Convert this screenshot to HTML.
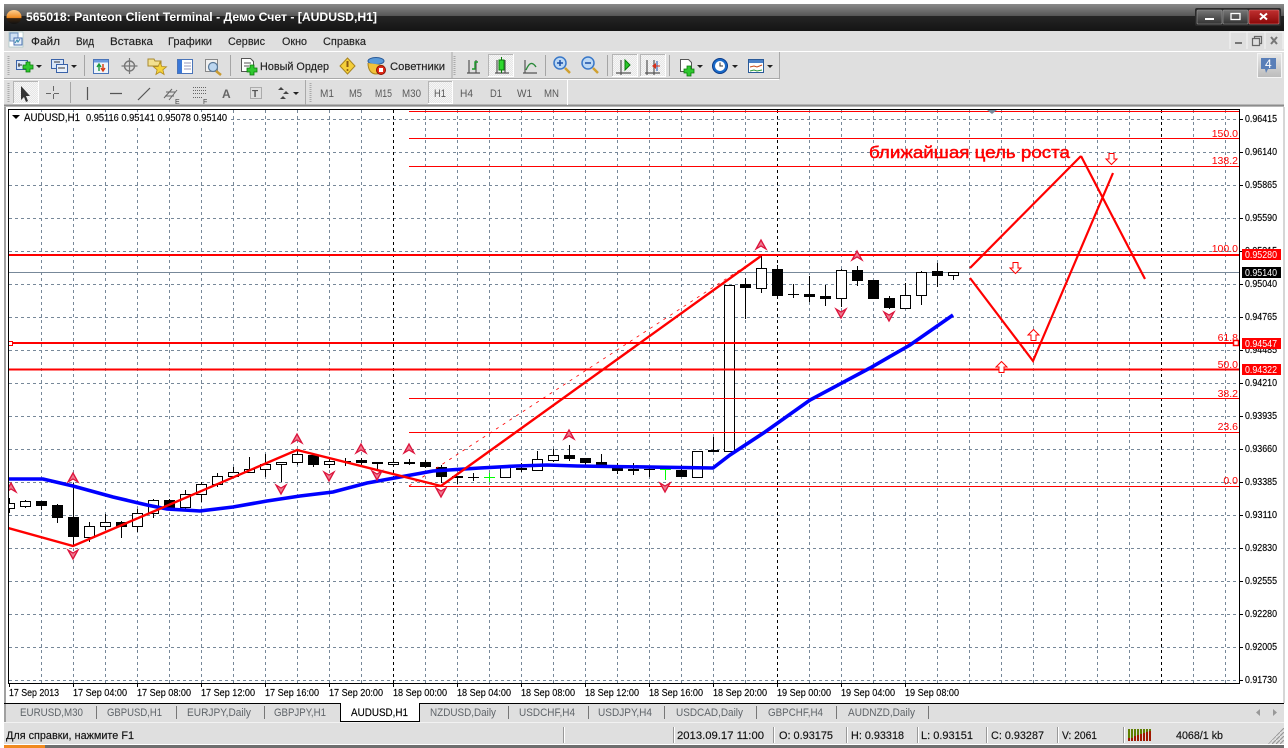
<!DOCTYPE html>
<html><head><meta charset="utf-8"><title>Panteon Client Terminal</title>
<style>
html,body{margin:0;padding:0;background:#fff;overflow:hidden}
svg{display:block}
text{font-family:"Liberation Sans","Noto Sans CJK JP",sans-serif}
</style></head><body>
<svg xmlns="http://www.w3.org/2000/svg" width="1288" height="748" viewBox="0 0 1288 748" font-size="11">
<defs>
<linearGradient id="tb" x1="0" y1="0" x2="0" y2="1"><stop offset="0" stop-color="#8a8a8a"/><stop offset="1" stop-color="#555"/></linearGradient>
<linearGradient id="tb2" x1="0" y1="0" x2="0" y2="1"><stop offset="0" stop-color="#252525"/><stop offset="1" stop-color="#141414"/></linearGradient>
<linearGradient id="orb" x1="0" y1="0" x2="0" y2="1"><stop offset="0" stop-color="#ffcf90"/><stop offset=".55" stop-color="#f08a20"/><stop offset=".6" stop-color="#3a2410"/><stop offset="1" stop-color="#111"/></linearGradient>
<linearGradient id="btn" x1="0" y1="0" x2="0" y2="1"><stop offset="0" stop-color="#777"/><stop offset="1" stop-color="#333"/></linearGradient>
<linearGradient id="cls" x1="0" y1="0" x2="0" y2="1"><stop offset="0" stop-color="#c03030"/><stop offset="1" stop-color="#8a0808"/></linearGradient>
<linearGradient id="bub" x1="0" y1="0" x2="0" y2="1"><stop offset="0" stop-color="#e8e8e8"/><stop offset="1" stop-color="#bbb"/></linearGradient>
<pattern id="chk" width="2" height="2" patternUnits="userSpaceOnUse"><rect width="2" height="2" fill="#e6e6e6"/><rect width="1" height="1" fill="#f6f6f6"/><rect x="1" y="1" width="1" height="1" fill="#f6f6f6"/></pattern>
<pattern id="grip" width="4" height="4" patternUnits="userSpaceOnUse"><path d="M0 4L4 0" stroke="#999" stroke-width="1.2"/></pattern>
<clipPath id="cc"><rect x="9" y="110" width="1231" height="573"/></clipPath>
<g id="up"><path d="M0-5L5 4L0 1L-5 4Z" fill="#ee7a90" stroke="#dc143c" stroke-width="1.3"/></g>
<g id="dn"><path d="M0 5L5-4L0-1L-5-4Z" fill="#ee7a90" stroke="#dc143c" stroke-width="1.3"/></g>
<g id="au"><path d="M0-5.5L5.5 0H2.5V5.5H-2.5V0H-5.5Z" fill="#fff" stroke="#f00" stroke-width="1"/></g>
<g id="ad"><path d="M0 5.5L5.5 0H2.5V-5.5H-2.5V0H-5.5Z" fill="#fff" stroke="#f00" stroke-width="1"/></g>
<g id="dd"><path d="M0 0h6l-3 3z" fill="#222"/></g>
<g id="plus"><path d="M3 0h4v3h3v4H7v3H3V7H0V3h3z" fill="#2fc82f" stroke="#0a7a0a" stroke-width=".8"/></g>
</defs>

<rect width="1288" height="748" fill="#fff"/>
<!-- window body -->
<rect x="4" y="4" width="1280" height="744" fill="#dfdfdf"/>
<!-- title bar -->
<rect x="4" y="4" width="1280" height="12" fill="url(#tb)"/>
<rect x="4" y="16" width="1280" height="15" fill="url(#tb2)"/>
<ellipse cx="14" cy="17" rx="7.5" ry="7" fill="url(#orb)"/>
<text x="26" y="21" font-size="12" font-weight="bold" fill="#fff" textLength="351" lengthAdjust="spacingAndGlyphs">565018: Panteon Client Terminal - Демо Счет - [AUDUSD,H1]</text>
<!-- window buttons -->
<rect x="1195" y="8" width="86" height="18" rx="2" fill="#2a2a2a"/>
<rect x="1197" y="10" width="25" height="14" rx="1" fill="url(#btn)" stroke="#999" stroke-width=".6"/>
<rect x="1223" y="10" width="25" height="14" rx="1" fill="url(#btn)" stroke="#999" stroke-width=".6"/>
<rect x="1249" y="10" width="30" height="14" rx="1" fill="url(#cls)" stroke="#d88" stroke-width=".6"/>
<rect x="1205" y="18" width="9" height="2" fill="#fff"/>
<rect x="1231" y="13.5" width="9" height="6" fill="none" stroke="#fff" stroke-width="1.3"/>
<path d="M1260 13.5l7 6m0-6l-7 6" stroke="#fff" stroke-width="2"/>

<!-- menu -->
<rect x="9" y="32" width="14" height="15" fill="#fff" stroke="#9bb" stroke-width=".6"/>
<rect x="10" y="33" width="8" height="8" fill="#cfe0f4" stroke="#6a8fc0"/>
<rect x="14" y="38" width="8" height="7" fill="#e6effa" stroke="#4a70b0"/>
<path d="M15 43l2-3 1 2 2-3" stroke="#38a" fill="none"/>
<g fill="#222" stroke="#222" stroke-width=".15">
<text x="31" y="45" textLength="29" lengthAdjust="spacingAndGlyphs">Файл</text>
<text x="76" y="45" textLength="18" lengthAdjust="spacingAndGlyphs">Вид</text>
<text x="110" y="45" textLength="43" lengthAdjust="spacingAndGlyphs">Вставка</text>
<text x="168" y="45" textLength="44" lengthAdjust="spacingAndGlyphs">Графики</text>
<text x="228" y="45" textLength="37" lengthAdjust="spacingAndGlyphs">Сервис</text>
<text x="282" y="45" textLength="25" lengthAdjust="spacingAndGlyphs">Окно</text>
<text x="323" y="45" textLength="43" lengthAdjust="spacingAndGlyphs">Справка</text>
</g>
<!-- mdi buttons -->
<path d="M1230 49V32h53v17" fill="none" stroke="#f4f4f4"/>
<path d="M1265 32v17M1247 32v17" stroke="#f4f4f4"/>
<rect x="1235" y="42" width="7" height="2" fill="#777"/>
<path d="M1252.5 38.5h7v7h-7zM1254.5 38.5v-2h7v7h-2" fill="none" stroke="#666" stroke-width="1.2"/>
<path d="M1271 37l6 7m0-7l-6 7" stroke="#777" stroke-width="2"/>

<!-- toolbar rows -->
<rect x="4" y="51" width="1280" height="1" fill="#fff"/>
<rect x="4" y="52" width="775" height="26" fill="#dfdfdf"/>
<path d="M4 78.5H779M779.5 52V79" stroke="#a9a9a9"/>
<rect x="4" y="79" width="775" height="1" fill="#fff"/>
<path d="M4 105.5H1284" stroke="#8c8c8c" stroke-width="2"/>
<path d="M567.5 80V105" stroke="#fff"/>
<path d="M305.5 80V105M452 52V78" stroke="#a9a9a9"/>
<path d="M8.5 56V75M8.5 83V102M310.5 83V102M454.5 56V75" stroke="#aaa" stroke-dasharray="1 1" stroke-width="2"/>
<path d="M84.5 55V76M230.5 55V76M545.5 55V76M607.5 55V76M669.5 55V76M70.5 82V103" stroke="#a5a5a5"/>

<!-- pressed buttons -->
<g fill="url(#chk)" stroke="#fff">
<rect x="488.5" y="54.5" width="25" height="22"/>
<rect x="612.5" y="54.5" width="25" height="22"/>
<rect x="640.5" y="54.5" width="25" height="22"/>
<rect x="13.5" y="81.5" width="25" height="22"/>
<rect x="428.5" y="81.5" width="24" height="22"/>
</g>
<path d="M488.5 76V54.5H513M612.5 76V54.5H637M640.5 76V54.5H665M13.5 103V81.5H38M428.5 103V81.5H452" fill="none" stroke="#b5b5b5"/>

<!-- row 1 icons -->
<rect x="16.5" y="60.5" width="11" height="9" fill="#d8e6f8" stroke="#3a62a8"/><path d="M19 63v4M18 65h4" stroke="#333"/>
<use href="#plus" x="23" y="62"/><use href="#dd" x="36" y="65"/>
<rect x="51.5" y="59.5" width="12" height="9" fill="#d8e6f8" stroke="#3a62a8"/><rect x="56.5" y="64.5" width="11" height="8" fill="#e8f0fb" stroke="#3a62a8"/>
<path d="M54 62h6M58 68h7" stroke="#333"/><use href="#dd" x="71" y="65"/>
<rect x="93.5" y="59.5" width="15" height="14" fill="#eef4fb" stroke="#4a74b8"/><rect x="94" y="60" width="14" height="2.5" fill="#6a9ae0"/>
<path d="M99 71v-6m-2 2l2-3 2 3" stroke="#1a9a3a" fill="none" stroke-width="1.4"/><path d="M103 64v6m-2-2l2 3 2-3" stroke="#d83a10" fill="none" stroke-width="1.4"/>
<circle cx="129.5" cy="66" r="5" fill="none" stroke="#777" stroke-width="1.4"/><path d="M129.5 58v16M121.5 66h16" stroke="#777" stroke-width="1.2"/>
<path d="M148 59h6l1 2h6v5h-13z" fill="#f2e090" stroke="#a88a30"/><path d="M160 62l1.8 4.5 4.7.3-3.600 3 1.200 4.700-4.100-2.600-4.100 2.600 1.200-4.700-3.600-3 4.700-.3z" fill="#f5d33a" stroke="#b08a20" stroke-width=".8"/>
<rect x="177.5" y="59.5" width="15" height="14" fill="#fff" stroke="#4a74b8"/><rect x="178" y="60" width="4" height="13" fill="#3a78d8"/><path d="M184 63h7M184 66h7M184 69h7" stroke="#99b"/>
<rect x="205.5" y="59.5" width="12" height="12" fill="#f0f0f0" stroke="#888"/><circle cx="213" cy="67" r="4.5" fill="#bcd6f0" stroke="#5a7a9a" stroke-width="1.2"/><path d="M216 71l5 4" stroke="#c89a30" stroke-width="2.5"/>
<path d="M241.5 58.5h9l3 3v10h-12z" fill="#fff" stroke="#555"/><path d="M244 63h7M244 66h5" stroke="#555"/><use href="#plus" x="247" y="65"/>
<text x="260" y="70" fill="#222" stroke="#222" stroke-width=".15" textLength="69" lengthAdjust="spacingAndGlyphs">Новый Ордер</text>
<path d="M347.5 58l7.5 8-7.5 8-7.5-8z" fill="#f5cf3a" stroke="#a88420"/><path d="M347.5 61v6" stroke="#8a5a10" stroke-width="2"/><circle cx="347.5" cy="70" r="1" fill="#8a5a10"/>
<ellipse cx="376" cy="61" rx="8" ry="3.5" fill="#5a9ad8" stroke="#2a5a98"/><path d="M368 63c0 8 4 11 8 11s7-3 7-9" fill="#f2c23a" stroke="#a88420"/><circle cx="381" cy="70" r="4.5" fill="#e02a1a" stroke="#8a1000"/><rect x="379" y="68" width="4" height="4" fill="#fff"/>
<text x="390" y="70" fill="#222" stroke="#222" stroke-width=".15" textLength="55" lengthAdjust="spacingAndGlyphs">Советники</text>
<!-- chart type icons -->
<g fill="none" stroke="#555" stroke-width="1.2">
<path d="M469 60v13M476 60v13M467 73h13"/><path d="M497 60v13M505 60v13M495 73h14"/><path d="M525 60v13M523 73h14"/><path d="M616 73h15M621 60v15"/><path d="M647 60v15M654 60v15M645 73h15"/>
</g>
<path d="M472 69h3v-7h3" fill="none" stroke="#1a9a2a" stroke-width="1.4"/>
<rect x="499" y="60" width="5" height="10" fill="#2fd82f" stroke="#0a7a0a"/><path d="M501.5 57v3M501.5 70v3" stroke="#0a7a0a"/>
<path d="M526 70c3-7 6-9 10-3" fill="none" stroke="#2a8a3a" stroke-width="1.4"/>
<path d="M625 60l5 5-5 5z" fill="#2ac82a" stroke="#0a7a0a"/>
<path d="M657 61v10" stroke="#1a50b0" stroke-width="1"/><path d="M652 66l4-3v6z" fill="#d8301a"/><path d="M656 66h4" stroke="#d8301a"/>
<!-- zoom -->
<circle cx="560" cy="63" r="6" fill="#bcd8f4" stroke="#3a78c8" stroke-width="1.5"/><path d="M557 63h6M560 60v6" stroke="#1a50a8" stroke-width="1.5"/><path d="M565 68l5 5" stroke="#d0a030" stroke-width="2.5"/>
<circle cx="588" cy="63" r="6" fill="#bcd8f4" stroke="#3a78c8" stroke-width="1.5"/><path d="M585 63h6" stroke="#1a50a8" stroke-width="1.5"/><path d="M593 68l5 5" stroke="#d0a030" stroke-width="2.5"/>
<!-- template, clock, window -->
<path d="M680.5 59.5h8l3 3v9h-11z" fill="#fff" stroke="#555"/><use href="#plus" x="684" y="66"/><use href="#dd" x="697" y="65"/>
<circle cx="720" cy="66" r="7.5" fill="#1a6ac8" stroke="#0a3a88"/><circle cx="720" cy="66" r="5" fill="#fff"/><path d="M720 62.5V66h3" stroke="#333" fill="none"/><use href="#dd" x="732" y="65"/>
<rect x="748.5" y="59.5" width="15" height="13" fill="#fff" stroke="#2a5a98"/><rect x="749" y="60" width="14" height="3" fill="#4a80c8"/><path d="M750 67l4-1 3 1 5-2" stroke="#c84a1a" fill="none"/><path d="M750 71l4-1 3 1 5-1" stroke="#2a9a3a" fill="none"/><use href="#dd" x="767" y="65"/>
<!-- message button -->
<rect x="1257.5" y="53.5" width="24" height="24" fill="url(#bub)" stroke="#f4f4f4"/>
<path d="M1261 58h15v11h-8l-2 4-1-4h-4z" fill="#5a7fb8"/>
<text x="1265" y="68" font-size="12" fill="#fff">4</text>

<!-- row 2 icons -->
<path d="M21 86v14l3-3 2 5 2-1-2-5h4z" fill="#333"/>
<path d="M53.5 86v14M46 93.5h15" stroke="#666" stroke-dasharray="5 3"/>
<path d="M87.5 87v13M110 93.5h12M138 100l12-12" stroke="#555" stroke-width="1.2"/>
<path d="M164 98l8-9M169 100l8-10M166 92h9M165 96h9" stroke="#666" fill="none"/><text x="175" y="104" font-size="7" fill="#444">E</text>
<path d="M193 87.5h14M193 90.5h14M193 93.5h14M193 97.5h10" stroke="#666" stroke-dasharray="1 1"/><text x="203" y="104" font-size="7" fill="#444">F</text>
<text x="222" y="98" font-size="12" font-weight="bold" fill="#666">A</text>
<rect x="250.5" y="87.5" width="11" height="11" fill="none" stroke="#777" stroke-dasharray="1 1"/><text x="252" y="97" font-size="10" font-weight="bold" fill="#555">T</text>
<path d="M281 87l3 3h-6zM286 91l3 3h-6zM283 96l3 3h-6z" fill="#444"/><use href="#dd" x="293" y="92"/>
<g fill="#5a5a5a" font-size="11">
<text x="320" y="97" textLength="14" lengthAdjust="spacingAndGlyphs">M1</text>
<text x="349" y="97" textLength="13" lengthAdjust="spacingAndGlyphs">M5</text>
<text x="375" y="97" textLength="17" lengthAdjust="spacingAndGlyphs">M15</text>
<text x="402" y="97" textLength="19" lengthAdjust="spacingAndGlyphs">M30</text>
<text x="434" y="97" textLength="12" lengthAdjust="spacingAndGlyphs">H1</text>
<text x="460" y="97" textLength="13" lengthAdjust="spacingAndGlyphs">H4</text>
<text x="490" y="97" textLength="12" lengthAdjust="spacingAndGlyphs">D1</text>
<text x="517" y="97" textLength="15" lengthAdjust="spacingAndGlyphs">W1</text>
<text x="544" y="97" textLength="15" lengthAdjust="spacingAndGlyphs">MN</text>
</g>

<!-- chart frame -->
<rect x="4" y="107" width="1280" height="596" fill="#fff"/>
<rect x="4" y="107" width="2" height="596" fill="#a0a0a0"/>
<rect x="1283" y="107" width="2" height="596" fill="#d6d6d6"/>
<rect x="9" y="110" width="1231" height="573" fill="#fff"/>

<g clip-path="url(#cc)" shape-rendering="crispEdges">
<!-- grid -->
<path fill="none" stroke="#778899" stroke-dasharray="3 3" d="M41.5 110V683M73.5 110V683M105.5 110V683M137.5 110V683M169.5 110V683M201.5 110V683M233.5 110V683M265.5 110V683M297.5 110V683M329.5 110V683M361.5 110V683M425.5 110V683M457.5 110V683M489.5 110V683M521.5 110V683M553.5 110V683M585.5 110V683M617.5 110V683M649.5 110V683M681.5 110V683M713.5 110V683M745.5 110V683M809.5 110V683M841.5 110V683M873.5 110V683M905.5 110V683M937.5 110V683M969.5 110V683M1001.5 110V683M1033.5 110V683M1065.5 110V683M1097.5 110V683M1129.5 110V683M1193.5 110V683M1225.5 110V683M9 119.5H1240M9 152.5H1240M9 185.5H1240M9 218.5H1240M9 251.5H1240M9 284.5H1240M9 317.5H1240M9 350.5H1240M9 383.5H1240M9 416.5H1240M9 449.5H1240M9 482.5H1240M9 515.5H1240M9 548.5H1240M9 581.5H1240M9 614.5H1240M9 647.5H1240M9 680.5H1240"/>
<path fill="none" stroke="#000" stroke-dasharray="3 3" d="M393.5 110V683M777.5 110V683M1161.5 110V683"/>
<!-- current price line -->
<path d="M9 272.5H1240" stroke="#778899"/>
<!-- wicks -->
<path fill="none" stroke="#000" d="M9.5 498V513M25.5 500V508M41.5 501V510M57.5 504V523M73.5 483V546M89.5 522V542M105.5 514V530M121.5 521V538M137.5 509V532M153.5 499V518M169.5 499V510M185.5 490V510M201.5 482V502M217.5 473V487M233.5 467V478M249.5 457V473M265.5 454V477M281.5 462V482M297.5 450V465M313.5 455V467M329.5 458V468M345.5 458V466M361.5 458V465M377.5 462V469M393.5 459V466M409.5 459V465M425.5 460V468M441.5 465V483M457.5 477V484M473.5 473V481M505.5 465V477M521.5 463V472M537.5 451V470M553.5 449V462M569.5 445V461M585.5 458V465M601.5 454V465M617.5 463V474M633.5 463V475M649.5 467V477M681.5 465V477M713.5 437V452M745.5 278V319M761.5 255V293M777.5 265V296M793.5 284V298M809.5 276V302M825.5 285V306M841.5 269V307M857.5 266V286M889.5 296V309M905.5 283V308M921.5 271V305M937.5 263V287M953.5 272V280M468 477.5H479M788 294.5H799M644 469.5H655M340 461.5H351"/>
<!-- black bodies -->
<path fill="#000" d="M36 501h11v5h-11zM52 505h11v13h-11zM68 517h11v20h-11zM116 522h11v5h-11zM164 500h11v8h-11zM308 455h11v10h-11zM356 460h11v3h-11zM372 462h11v2h-11zM404 462h11v2h-11zM420 462h11v5h-11zM436 467h11v10h-11zM452 476h11v2h-11zM516 468h11v2h-11zM564 455h11v4h-11zM580 458h11v5h-11zM596 462h11v3h-11zM612 468h11v3h-11zM628 469h11v2h-11zM676 470h11v7h-11zM708 450h11v2h-11zM740 284h11v4h-11zM772 269h11v27h-11zM804 294h11v3h-11zM820 296h11v3h-11zM852 270h11v11h-11zM868 280h11v19h-11zM884 298h11v10h-11zM932 271h11v5h-11z"/>
<!-- white bodies -->
<path fill="#fff" stroke="#000" d="M4.5 503.5h10v5h-10zM20.5 501.5h10v5h-10zM84.5 526.5h10v11h-10zM100.5 522.5h10v4h-10zM132.5 513.5h10v13h-10zM148.5 500.5h10v13h-10zM180.5 494.5h10v13h-10zM196.5 484.5h10v10h-10zM212.5 476.5h10v8h-10zM228.5 472.5h10v4h-10zM244.5 469.5h10v3h-10zM260.5 464.5h10v5h-10zM276.5 462.5h10v2h-10zM292.5 454.5h10v8h-10zM324.5 461.5h10v3h-10zM388.5 462.5h10v2h-10zM500.5 467.5h10v10h-10zM532.5 459.5h10v11h-10zM548.5 455.5h10v5h-10zM692.5 451.5h10v26h-10zM724.5 285.5h10v166h-10zM756.5 268.5h10v20h-10zM836.5 270.5h10v28h-10zM900.5 295.5h10v13h-10zM916.5 272.5h10v23h-10zM948.5 272.5h10v3h-10z"/>
<!-- green dojis -->
<path fill="none" stroke="#00ff00" d="M484 477.5H495M489.5 473V482M660 469.5H671M665.5 469V480"/>
<!-- fibo -->
<path d="M409 111.5H1240M409 138.5H1240M409 166.5H1240M409 398.5H1240M409 432.5H1240M409 486.5H1240" stroke="#f00"/>
<path d="M9 255H1240M9 343H1240M9 369.5H1240" stroke="#f00" stroke-width="2"/>
</g>

<!-- chart legend bg -->
<rect x="9" y="112" width="219" height="13" fill="#fff"/>
<path d="M12 115h8l-4 4z" fill="#000"/>
<text x="24" y="121" textLength="56" lengthAdjust="spacingAndGlyphs" fill="#000" stroke="#000" stroke-width=".15">AUDUSD,H1</text>
<text x="86" y="121" font-size="10.5" textLength="141" lengthAdjust="spacingAndGlyphs" fill="#000" stroke="#000" stroke-width=".15">0.95116 0.95141 0.95078 0.95140</text>

<g clip-path="url(#cc)">
<!-- dashed trend -->
<path d="M409 486L761 256" stroke="#f00" stroke-width=".8" stroke-dasharray="3 5" fill="none"/>
<!-- blue MA -->
<path fill="none" stroke="#0000ff" stroke-width="3.6" d="M8 479L43 479L73 486L113 497L147 505L167 509L200 511L233 507L267 501L300 496L333 492L367 483L400 477L433 471L480 468L517 466L547 465L577 466L713 468L730 455L765 432L810 400L870 368L910 345L953 315"/>
<!-- red zigzag -->
<path fill="none" stroke="#f00" stroke-width="2.4" d="M8 528L73 546L297 450L441 486L761 256"/>
<!-- forecast -->
<path fill="none" stroke="#f00" stroke-width="2.2" d="M970 268L1081 156M1081 156L1145 279M970 278L1033 361L1113 173"/>
<!-- fractals -->
<use href="#up" x="11" y="488"/><use href="#up" x="73" y="478"/><use href="#up" x="297" y="439"/><use href="#up" x="361" y="449"/><use href="#up" x="409" y="449"/><use href="#up" x="569" y="435"/><use href="#up" x="761" y="245"/><use href="#up" x="857" y="256"/>
<use href="#dn" x="73" y="554"/><use href="#dn" x="281" y="489"/><use href="#dn" x="329" y="476"/><use href="#dn" x="377" y="475"/><use href="#dn" x="441" y="492"/><use href="#dn" x="665" y="487"/><use href="#dn" x="841" y="313"/><use href="#dn" x="889" y="316"/>
<!-- arrows -->
<use href="#ad" x="1111.5" y="159"/><use href="#ad" x="1015.5" y="268"/><use href="#au" x="1033.5" y="335"/><use href="#au" x="1001.5" y="367"/>
<text x="869" y="158" font-size="17" fill="#f00" stroke="#f00" stroke-width=".45" textLength="201" lengthAdjust="spacingAndGlyphs">ближайшая цель роста</text>
</g>
<!-- fibo labels -->
<g fill="#f00" font-size="10.5" text-anchor="end">
<text x="1238" y="137">150.0</text><text x="1238" y="164">138.2</text><text x="1238" y="252">100.0</text><text x="1238" y="341">61.8</text><text x="1238" y="368">50.0</text><text x="1238" y="397">38.2</text><text x="1238" y="430">23.6</text><text x="1238" y="484">0.0</text>
</g>
<rect x="1233.5" y="340.5" width="5" height="5" fill="#fff" stroke="#f00" stroke-width="1.5"/>
<rect x="8.5" y="341.5" width="4" height="4" fill="#fff" stroke="#f00"/>
<!-- frame lines -->
<rect x="8.5" y="109.5" width="1231" height="574" fill="none" stroke="#000"/>
<path d="M987 110h10l-5 4z" fill="#778899"/>
<!-- axis ticks -->
<path stroke="#000" d="M1240 119.5h3M1240 152.5h3M1240 185.5h3M1240 218.5h3M1240 251.5h3M1240 284.5h3M1240 317.5h3M1240 350.5h3M1240 383.5h3M1240 416.5h3M1240 449.5h3M1240 482.5h3M1240 515.5h3M1240 548.5h3M1240 581.5h3M1240 614.5h3M1240 647.5h3M1240 680.5h3M9.5 684v3M73.5 684v3M137.5 684v3M201.5 684v3M265.5 684v3M329.5 684v3M393.5 684v3M457.5 684v3M521.5 684v3M585.5 684v3M649.5 684v3M713.5 684v3M777.5 684v3M841.5 684v3M905.5 684v3"/>
<!-- price axis -->
<g fill="#000" stroke="#000" stroke-width=".15" font-size="10.5">
<text x="1245" y="122" textLength="32" lengthAdjust="spacingAndGlyphs">0.96415</text>
<text x="1245" y="155" textLength="32" lengthAdjust="spacingAndGlyphs">0.96140</text>
<text x="1245" y="188" textLength="32" lengthAdjust="spacingAndGlyphs">0.95865</text>
<text x="1245" y="221" textLength="32" lengthAdjust="spacingAndGlyphs">0.95590</text>
<text x="1245" y="254" textLength="32" lengthAdjust="spacingAndGlyphs">0.95315</text>
<text x="1245" y="287" textLength="32" lengthAdjust="spacingAndGlyphs">0.95040</text>
<text x="1245" y="320" textLength="32" lengthAdjust="spacingAndGlyphs">0.94765</text>
<text x="1245" y="353" textLength="32" lengthAdjust="spacingAndGlyphs">0.94485</text>
<text x="1245" y="386" textLength="32" lengthAdjust="spacingAndGlyphs">0.94210</text>
<text x="1245" y="419" textLength="32" lengthAdjust="spacingAndGlyphs">0.93935</text>
<text x="1245" y="452" textLength="32" lengthAdjust="spacingAndGlyphs">0.93660</text>
<text x="1245" y="485" textLength="32" lengthAdjust="spacingAndGlyphs">0.93385</text>
<text x="1245" y="518" textLength="32" lengthAdjust="spacingAndGlyphs">0.93110</text>
<text x="1245" y="551" textLength="32" lengthAdjust="spacingAndGlyphs">0.92830</text>
<text x="1245" y="584" textLength="32" lengthAdjust="spacingAndGlyphs">0.92555</text>
<text x="1245" y="617" textLength="32" lengthAdjust="spacingAndGlyphs">0.92280</text>
<text x="1245" y="650" textLength="32" lengthAdjust="spacingAndGlyphs">0.92005</text>
<text x="1245" y="683" textLength="32" lengthAdjust="spacingAndGlyphs">0.91730</text>
</g>
<!-- price tags -->
<rect x="1242" y="249" width="39" height="11" fill="#f00"/><rect x="1242" y="267" width="39" height="11" fill="#000"/><rect x="1242" y="338" width="39" height="11" fill="#f00"/><rect x="1242" y="364" width="39" height="11" fill="#f00"/>
<g fill="#fff" font-size="10.5">
<text x="1245" y="258" textLength="32" lengthAdjust="spacingAndGlyphs">0.95280</text>
<text x="1245" y="276" textLength="32" lengthAdjust="spacingAndGlyphs">0.95140</text>
<text x="1245" y="347" textLength="32" lengthAdjust="spacingAndGlyphs">0.94547</text>
<text x="1245" y="373" textLength="32" lengthAdjust="spacingAndGlyphs">0.94322</text>
</g>
<!-- date axis -->
<g fill="#000" stroke="#000" stroke-width=".15" font-size="10.5">
<text x="9" y="696" textLength="50" lengthAdjust="spacingAndGlyphs">17 Sep 2013</text>
<text x="73" y="696" textLength="54" lengthAdjust="spacingAndGlyphs">17 Sep 04:00</text>
<text x="137" y="696" textLength="54" lengthAdjust="spacingAndGlyphs">17 Sep 08:00</text>
<text x="201" y="696" textLength="54" lengthAdjust="spacingAndGlyphs">17 Sep 12:00</text>
<text x="265" y="696" textLength="54" lengthAdjust="spacingAndGlyphs">17 Sep 16:00</text>
<text x="329" y="696" textLength="54" lengthAdjust="spacingAndGlyphs">17 Sep 20:00</text>
<text x="393" y="696" textLength="54" lengthAdjust="spacingAndGlyphs">18 Sep 00:00</text>
<text x="457" y="696" textLength="54" lengthAdjust="spacingAndGlyphs">18 Sep 04:00</text>
<text x="521" y="696" textLength="54" lengthAdjust="spacingAndGlyphs">18 Sep 08:00</text>
<text x="585" y="696" textLength="54" lengthAdjust="spacingAndGlyphs">18 Sep 12:00</text>
<text x="649" y="696" textLength="54" lengthAdjust="spacingAndGlyphs">18 Sep 16:00</text>
<text x="713" y="696" textLength="54" lengthAdjust="spacingAndGlyphs">18 Sep 20:00</text>
<text x="777" y="696" textLength="54" lengthAdjust="spacingAndGlyphs">19 Sep 00:00</text>
<text x="841" y="696" textLength="54" lengthAdjust="spacingAndGlyphs">19 Sep 04:00</text>
<text x="905" y="696" textLength="54" lengthAdjust="spacingAndGlyphs">19 Sep 08:00</text>
</g>

<!-- tabs -->
<rect x="4" y="703" width="1280" height="19" fill="#dfdfdf"/>
<rect x="4" y="703" width="2" height="19" fill="#a0a0a0"/>
<path d="M4 703.5H1284" stroke="#000"/>
<rect x="4" y="722" width="1280" height="1" fill="#f2f2f2"/>
<path d="M340.5 703V721.5H419.5V703" fill="#fff" stroke="#000"/>
<rect x="341" y="703" width="78" height="1" fill="#fff"/>
<path d="M96.5 706V719M176.5 706V719M264.5 706V719M508.5 706V719M588.5 706V719M664.5 706V719M756.5 706V719M836.5 706V719M928.5 706V719" stroke="#777"/>
<g fill="#5f6469">
<text x="20" y="716" textLength="63" lengthAdjust="spacingAndGlyphs">EURUSD,M30</text>
<text x="107" y="716" textLength="55" lengthAdjust="spacingAndGlyphs">GBPUSD,H1</text>
<text x="187" y="716" textLength="64" lengthAdjust="spacingAndGlyphs">EURJPY,Daily</text>
<text x="274" y="716" textLength="52" lengthAdjust="spacingAndGlyphs">GBPJPY,H1</text>
<text x="430" y="716" textLength="66" lengthAdjust="spacingAndGlyphs">NZDUSD,Daily</text>
<text x="519" y="716" textLength="56" lengthAdjust="spacingAndGlyphs">USDCHF,H4</text>
<text x="598" y="716" textLength="54" lengthAdjust="spacingAndGlyphs">USDJPY,H4</text>
<text x="676" y="716" textLength="67" lengthAdjust="spacingAndGlyphs">USDCAD,Daily</text>
<text x="768" y="716" textLength="55" lengthAdjust="spacingAndGlyphs">GBPCHF,H4</text>
<text x="848" y="716" textLength="67" lengthAdjust="spacingAndGlyphs">AUDNZD,Daily</text>
</g>
<text x="351" y="716" textLength="57" lengthAdjust="spacingAndGlyphs" fill="#000" stroke="#000" stroke-width=".15">AUDUSD,H1</text>
<path d="M1260 709v7l-4-3.5zM1273 709v7l4-3.5z" fill="#999"/>

<!-- status bar -->
<rect x="4" y="723" width="1280" height="22" fill="#dfdfdf"/>
<path d="M563.5 727V743M673.5 727V743M773.5 727V743M846.5 727V743M917.5 727V743M986.5 727V743M1057.5 727V743M1123.5 727V743" stroke="#999"/>
<path d="M564.5 727V743M674.5 727V743M774.5 727V743M847.5 727V743M918.5 727V743M987.5 727V743M1058.5 727V743M1124.5 727V743" stroke="#fff"/>
<g fill="#111" stroke="#111" stroke-width=".15">
<text x="6" y="739" textLength="128" lengthAdjust="spacingAndGlyphs">Для справки, нажмите F1</text>
<text x="677" y="739" textLength="87" lengthAdjust="spacingAndGlyphs">2013.09.17 11:00</text>
<text x="779" y="739" textLength="54" lengthAdjust="spacingAndGlyphs">O: 0.93175</text>
<text x="851" y="739" textLength="53" lengthAdjust="spacingAndGlyphs">H: 0.93318</text>
<text x="921" y="739" textLength="52" lengthAdjust="spacingAndGlyphs">L: 0.93151</text>
<text x="991" y="739" textLength="53" lengthAdjust="spacingAndGlyphs">C: 0.93287</text>
<text x="1062" y="739" textLength="35" lengthAdjust="spacingAndGlyphs">V: 2061</text>
<text x="1176" y="739" textLength="47" lengthAdjust="spacingAndGlyphs">4068/1 kb</text>
</g>
<!-- connection bars -->
<rect x="1128" y="729" width="23" height="12" fill="#5f7f00"/>
<g fill="#dfdfdf"><rect x="1130" y="729" width="1" height="12"/><rect x="1133" y="729" width="1" height="12"/><rect x="1136" y="729" width="1" height="12"/><rect x="1139" y="729" width="1" height="12"/><rect x="1142" y="729" width="1" height="12"/><rect x="1145" y="729" width="1" height="12"/><rect x="1148" y="729" width="1" height="12"/></g>
<path d="M1128 741V738h2v3zM1131 741V738h2v3zM1134 741V736h2v5zM1137 741V735h2v6zM1140 741V734h2v7zM1143 741V733h2v8zM1146 741V732h2v9zM1149 741V731h2v10z" fill="#a01800"/>
<path d="M1284 727V744H1268z" fill="url(#grip)"/>

<!-- bottom strip -->
<rect x="0" y="744" width="1288" height="4" fill="#fff"/>
<rect x="4" y="745" width="1280" height="3" fill="#6e6e6e"/>
<rect x="4" y="745" width="41" height="3" fill="#f08a20"/>
</svg>
</body></html>
